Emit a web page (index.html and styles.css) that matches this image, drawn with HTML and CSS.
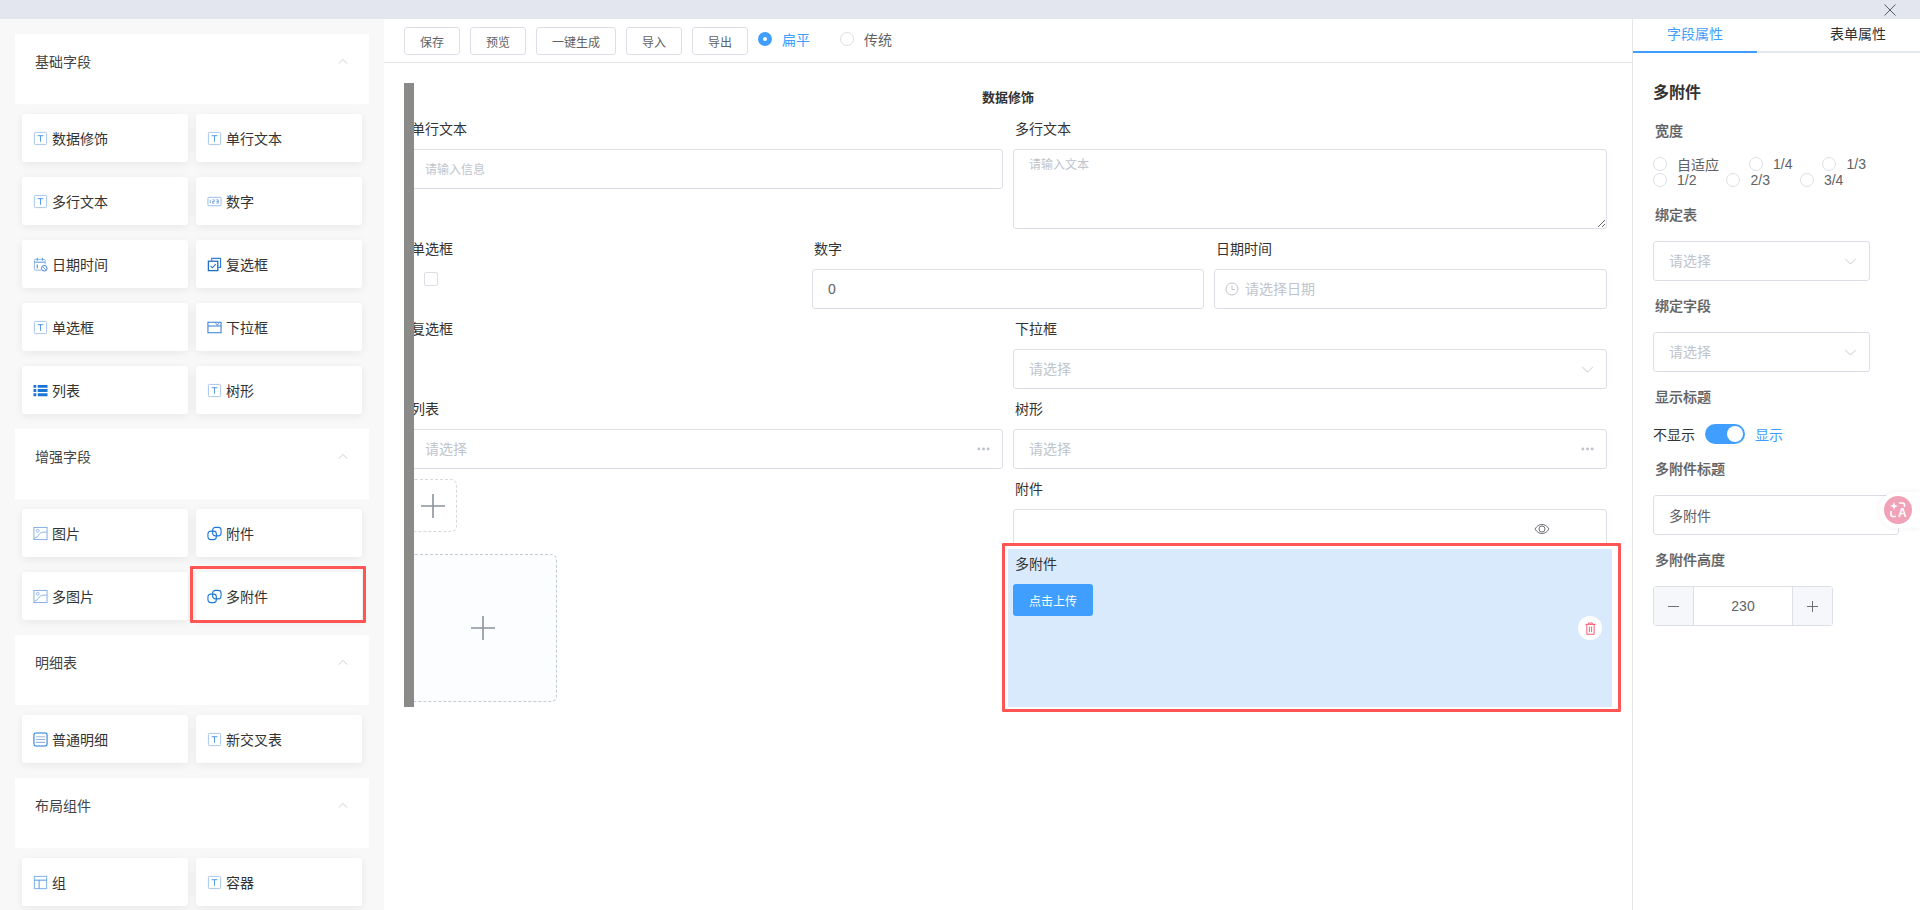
FILE: index.html
```html
<!DOCTYPE html>
<html lang="zh-CN">
<head>
<meta charset="utf-8">
<title>表单设计器</title>
<link rel="stylesheet" href="styles.css">
</head>
<body>
<svg class="sprite" aria-hidden="true">
  <symbol id="i-text" viewBox="0 0 16 16"><rect x="1.5" y="1.5" width="13" height="13" rx="1" fill="#fff" stroke="#a5c3ea"/><path d="M5 5h6M8 5v6.5" fill="none" stroke="#4a94e6"/></symbol>
  <symbol id="i-num" viewBox="0 0 16 16"><rect x="1" y="3.5" width="14" height="9" rx="1" fill="#fff" stroke="#94b8e8"/><path d="M3.5 6.2v3.6M6 6.2h1.8v1.8H6v1.8h1.8M10 6.2h2v3.6h-2M10 8h2" fill="none" stroke="#5a8fd8" stroke-width=".8"/></symbol>
  <symbol id="i-date" viewBox="0 0 16 16"><path d="M9 14H2.5a1 1 0 0 1-1-1V3.5a1 1 0 0 1 1-1h9.5a1 1 0 0 1 1 1V8" fill="none" stroke="#8fb3e6"/><path d="M1.5 5.5h11.5M4.5 1v3M10 1v3" fill="none" stroke="#4a8fe0"/><path d="M4.5 8v4" fill="none" stroke="#3f6fb8"/><circle cx="12" cy="12" r="3" fill="#fff" stroke="#3d7fd6"/><path d="M10.5 10.5l3 3" stroke="#3d7fd6" stroke-width=".8"/></symbol>
  <symbol id="i-check" viewBox="0 0 16 16"><path d="M5 4V1.5h9.5V11H12" fill="none" stroke="#2f7fd6" stroke-width="1.2"/><rect x="1.5" y="4.5" width="10" height="10" fill="#fff" stroke="#1f6fc8" stroke-width="1.4"/><path d="M3.8 9.5l2 2 3.5-3.8" fill="none" stroke="#1f6fc8" stroke-width="1.1"/></symbol>
  <symbol id="i-select" viewBox="0 0 16 16"><path d="M1 2.5h14v4H1zM1 6.5v7h14v-7" fill="none" stroke="#2f7fd6" stroke-width="1.1"/><path d="M9 3.5l2 1.6 2-1.6" fill="none" stroke="#3a72c4"/></symbol>
  <symbol id="i-list" viewBox="0 0 16 16"><path d="M5 2h10.5v3H5zM5 6.5h10.5v3H5zM5 11h10.5v3H5zM.5 2h3v3h-3zM.5 6.5h3v3h-3zM.5 11h3v3h-3z" fill="#1b76d3"/></symbol>
  <symbol id="i-img" viewBox="0 0 16 16"><rect x="1" y="1.5" width="14" height="13" fill="#fff" stroke="#7ea9e4"/><circle cx="5" cy="5" r="1.5" fill="none" stroke="#8fb3e6"/><path d="M1.5 13c2.500-.5 3.500-2 5-4s3-2.500 8-2.500" fill="none" stroke="#7ea9e4"/></symbol>
  <symbol id="i-attach" viewBox="0 0 16 16"><rect x="1" y="5.500" width="9" height="9" rx="3" fill="none" stroke="#1f78d8" stroke-width="1.2"/><rect x="6" y="1.500" width="9" height="9" rx="3" fill="none" stroke="#1f78d8" stroke-width="1.2"/></symbol>
  <symbol id="i-table" viewBox="0 0 16 16"><rect x="1" y="1" width="14" height="14" rx="2" fill="#fff" stroke="#1f78d8" stroke-width="1.1"/><path d="M3 5h10M3 8h10M3 11h10" stroke="#9db7dc" stroke-width="1.2"/></symbol>
  <symbol id="i-group" viewBox="0 0 16 16"><rect x="1.500" y="1.500" width="13" height="13" fill="#fff" stroke="#8db7ea" stroke-width="1.2"/><path d="M1.500 5.500h13M6.500 5.500v9" fill="none" stroke="#4a94e6"/></symbol>
  <symbol id="i-up" viewBox="0 0 12 8"><path d="M1 6.500l5-5 5 5" fill="none" stroke="#c0c4cc"/></symbol>
  <symbol id="i-down" viewBox="0 0 14 8"><path d="M1 1l6 6 6-6" fill="none" stroke="#c0c4cc"/></symbol>
  <symbol id="i-dots" viewBox="0 0 14 4"><circle cx="2" cy="2" r="1.600" fill="#c0c4cc"/><circle cx="7" cy="2" r="1.600" fill="#c0c4cc"/><circle cx="12" cy="2" r="1.600" fill="#c0c4cc"/></symbol>
  <symbol id="i-plus" viewBox="0 0 24 24"><path d="M0 12h24M12 0v24" fill="none" stroke="#8c939d" stroke-width="1.600"/></symbol>
</svg>

<header class="topbar">
  <svg class="close" viewBox="0 0 12 12"><path d="M.5.5l11 11M11.500.5l-11 11" fill="none" stroke="#555c66"/></svg>
</header>

<div class="layout">
  <aside class="sidebar">
    <section>
      <div class="group-head"><span>基础字段</span><svg class="chev"><use href="#i-up"/></svg></div>
      <div class="cards">
        <div class="card"><svg class="ico"><use href="#i-text"/></svg>数据修饰</div>
        <div class="card"><svg class="ico"><use href="#i-text"/></svg>单行文本</div>
        <div class="card"><svg class="ico"><use href="#i-text"/></svg>多行文本</div>
        <div class="card"><svg class="ico"><use href="#i-num"/></svg>数字</div>
        <div class="card"><svg class="ico"><use href="#i-date"/></svg>日期时间</div>
        <div class="card"><svg class="ico"><use href="#i-check"/></svg>复选框</div>
        <div class="card"><svg class="ico"><use href="#i-text"/></svg>单选框</div>
        <div class="card"><svg class="ico"><use href="#i-select"/></svg>下拉框</div>
        <div class="card"><svg class="ico"><use href="#i-list"/></svg>列表</div>
        <div class="card"><svg class="ico"><use href="#i-text"/></svg>树形</div>
      </div>
    </section>
    <section>
      <div class="group-head"><span>增强字段</span><svg class="chev"><use href="#i-up"/></svg></div>
      <div class="cards">
        <div class="card"><svg class="ico"><use href="#i-img"/></svg>图片</div>
        <div class="card"><svg class="ico"><use href="#i-attach"/></svg>附件</div>
        <div class="card"><svg class="ico"><use href="#i-img"/></svg>多图片</div>
        <div class="card card-marked"><svg class="ico"><use href="#i-attach"/></svg>多附件</div>
      </div>
    </section>
    <section>
      <div class="group-head"><span>明细表</span><svg class="chev"><use href="#i-up"/></svg></div>
      <div class="cards">
        <div class="card"><svg class="ico"><use href="#i-table"/></svg>普通明细</div>
        <div class="card"><svg class="ico"><use href="#i-text"/></svg>新交叉表</div>
      </div>
    </section>
    <section>
      <div class="group-head"><span>布局组件</span><svg class="chev"><use href="#i-up"/></svg></div>
      <div class="cards">
        <div class="card"><svg class="ico"><use href="#i-group"/></svg>组</div>
        <div class="card"><svg class="ico"><use href="#i-text"/></svg>容器</div>
      </div>
    </section>
  </aside>

  <main class="center">
    <div class="toolbar">
      <button class="btn">保存</button>
      <button class="btn">预览</button>
      <button class="btn">一键生成</button>
      <button class="btn">导入</button>
      <button class="btn">导出</button>
      <div class="mode">
        <span class="mode-item is-on"><i class="dot"></i>扁平</span>
        <span class="mode-item"><i class="dot"></i>传统</span>
      </div>
    </div>
    <div class="canvas">
      <div class="drag-bar"></div>
      <h2 class="form-title">数据修饰</h2>
      <div class="row cols-2">
        <div class="item"><label>单行文本</label><div class="ctl"><input class="small-ph" placeholder="请输入信息"></div></div>
        <div class="item"><label>多行文本</label><textarea class="area" placeholder="请输入文本"></textarea></div>
      </div>
      <div class="row cols-3">
        <div class="item"><label>单选框</label><div class="ctl-blank"><span class="box"></span></div></div>
        <div class="item"><label>数字</label><div class="ctl"><input value="0"></div></div>
        <div class="item"><label>日期时间</label><div class="ctl ctl-date"><svg class="clock" viewBox="0 0 14 14"><circle cx="7" cy="7" r="6" fill="none" stroke="#c0c4cc"/><path d="M7 3.500V7.500H10" fill="none" stroke="#c0c4cc"/></svg><input placeholder="请选择日期"></div></div>
      </div>
      <div class="row cols-2">
        <div class="item"><label>复选框</label></div>
        <div class="item"><label>下拉框</label><div class="ctl"><input placeholder="请选择"><svg class="down"><use href="#i-down"/></svg></div></div>
      </div>
      <div class="row cols-2">
        <div class="item"><label>列表</label><div class="ctl"><input placeholder="请选择"><svg class="dots"><use href="#i-dots"/></svg></div></div>
        <div class="item"><label>树形</label><div class="ctl"><input placeholder="请选择"><svg class="dots"><use href="#i-dots"/></svg></div></div>
      </div>
      <div class="row cols-2 row-tight">
        <div class="item"><div class="upload-small"><svg class="plus"><use href="#i-plus"/></svg></div></div>
        <div class="item"><label>附件</label><div class="ctl ctl-eye"><svg class="eye" viewBox="0 0 16 16"><path d="M1 8c1.800-3 4.200-4.500 7-4.500S13.200 5 15 8c-1.800 3-4.200 4.500-7 4.500S2.800 11 1 8z" fill="none" stroke="#6f7277"/><circle cx="8" cy="8" r="3" fill="none" stroke="#6f7277"/></svg></div></div>
      </div>
      <div class="row cols-2">
        <div class="item"><div class="upload-big"><svg class="plus"><use href="#i-plus"/></svg></div></div>
        <div class="selected-frame">
          <div class="selected">
            <label>多附件</label>
            <button class="btn-primary">点击上传</button>
            <span class="del"><svg viewBox="0 0 12 14"><path d="M.5 2.500h11M4 2.500V1h4v1.500M2 2.500v10.800h8V2.500M4.800 5v6M7.200 5v6" fill="none" stroke="#f4516c"/></svg></span>
          </div>
        </div>
      </div>
    </div>
  </main>

  <aside class="props">
    <div class="tabs">
      <div class="tab is-active">字段属性</div>
      <div class="tab tab-rest">表单属性</div>
    </div>
    <div class="props-body">
      <h3 class="props-title">多附件</h3>
      <div class="p-label p-label-width">宽度</div>
      <div class="radios">
        <span class="radio"><i></i>自适应</span>
        <span class="radio"><i></i>1/4</span>
        <span class="radio"><i></i>1/3</span>
        <span class="radio"><i></i>1/2</span>
        <span class="radio"><i></i>2/3</span>
        <span class="radio"><i></i>3/4</span>
      </div>
      <div class="p-label p-label-bound">绑定表</div>
      <div class="ctl w-select"><input placeholder="请选择"><svg class="down"><use href="#i-down"/></svg></div>
      <div class="p-label">绑定字段</div>
      <div class="ctl w-select"><input placeholder="请选择"><svg class="down"><use href="#i-down"/></svg></div>
      <div class="p-label">显示标题</div>
      <div class="switch-row">
        <span>不显示</span>
        <span class="switch"><i></i></span>
        <span class="on-text">显示</span>
      </div>
      <div class="p-label">多附件标题</div>
      <div class="ctl w-title"><input value="多附件"></div>
      <div class="p-label">多附件高度</div>
      <div class="stepper">
        <span class="step"><svg viewBox="0 0 12 12"><path d="M0 6h12" stroke="#606266"/></svg></span>
        <span class="step-val">230</span>
        <span class="step"><svg viewBox="0 0 12 12"><path d="M0 6h12M6 0v12" stroke="#606266"/></svg></span>
      </div>
    </div>
  </aside>
</div>

<div class="translate">
  <span class="translate-btn">
    <svg viewBox="0 0 20 20"><path d="M11 3h3.500a2 2 0 0 1 2 2v2M3 11v3.500a2 2 0 0 0 2 2h3" fill="none" stroke="#fff" stroke-width="1.600"/><path d="M6 2l1.100 2.900L10 6 7.100 7.100 6 10 4.900 7.100 2 6l2.900-1.100z" fill="#fff"/></svg>
    <b>A</b>
  </span>
</div>
</body>
</html>
```

FILE: styles.css
```css
* { box-sizing: border-box; }
html, body { margin: 0; height: 100%; overflow: hidden; }
body {
  font-family: "Liberation Sans", "Noto Sans CJK SC", sans-serif;
  font-size: 14px;
  color: #333;
  background: #fff;
  position: relative;
}
.sprite { position: absolute; width: 0; height: 0; }

.topbar {
  height: 19px;
  background: #e3e6ee;
  display: flex;
  justify-content: flex-end;
  align-items: center;
  padding-right: 24px;
}
.close { width: 12px; height: 12px; }

.layout { display: flex; height: 891px; }

/* left */
.sidebar {
  width: 384px;
  flex: none;
  background: #f8f8f8;
  padding: 15px 15px 0;
  overflow: hidden;
}
.group-head {
  height: 70px;
  background: #fff;
  display: flex;
  justify-content: space-between;
  padding: 18px 21px 0 20px;
  line-height: 20px;
  color: #444;
}
.chev { width: 10px; height: 7px; margin-top: 6px; }
.cards {
  display: grid;
  grid-template-columns: 166px 166px;
  column-gap: 8px;
  row-gap: 15px;
  padding: 10px 7px 15px;
}
.card {
  height: 48px;
  background: #fff;
  border-radius: 3px;
  box-shadow: 0 2px 8px rgba(0, 0, 0, .07);
  display: flex;
  align-items: center;
  padding-left: 11px;
  color: #333;
}
.ico { width: 15px; height: 15px; margin-right: 4px; flex: none; }
.card-marked { position: relative; }
.card-marked::after {
  content: "";
  position: absolute;
  inset: -6px -4px -3px -6px;
  border: 3px solid #f55;
  border-radius: 1px;
}

/* center */
.center { flex: 1; min-width: 0; }
.toolbar {
  height: 44px;
  border-bottom: 1px solid #e6e6e6;
  display: flex;
  gap: 10px;
  padding: 8px 20px 0;
}
.btn {
  height: 28px;
  padding: 0 15px;
  border: 1px solid #dcdfe6;
  border-radius: 3px;
  background: #fff;
  font: inherit;
  font-size: 12px;
  color: #606266;
}
.mode { display: flex; gap: 30px; height: 24px; align-items: center; }
.mode-item { display: flex; align-items: center; gap: 10px; color: #606266; }
.dot {
  width: 14px;
  height: 14px;
  border: 1px solid #dcdfe6;
  border-radius: 50%;
  background: #fff;
}
.mode-item.is-on { color: #409eff; }
.mode-item.is-on .dot { border: 5px solid #409eff; }

.canvas { position: relative; padding: 25px 25px 0; height: 847px; }
.drag-bar {
  position: absolute;
  left: 20px;
  top: 20px;
  width: 10px;
  height: 624px;
  background: #8a8b89;
  z-index: 2;
}
.form-title {
  margin: 0 0 11px;
  height: 20px;
  font-size: 13px;
  line-height: 20px;
  font-weight: 700;
  text-align: center;
  width: 1198px;
  color: #333;
}
.row { display: grid; column-gap: 10px; width: 1198px; margin-bottom: 10px; }
.cols-2 { grid-template-columns: 594px 594px; }
.cols-3 { grid-template-columns: 393px 392px 393px; }
.row-tight { margin-bottom: 5px; }
.item label, .selected label {
  display: block;
  height: 20px;
  line-height: 20px;
  margin-bottom: 10px;
  padding-left: 2px;
  color: #333;
}
.ctl {
  height: 40px;
  border: 1px solid #dcdfe6;
  border-radius: 3px;
  display: flex;
  align-items: center;
  padding: 0 15px;
  background: #fff;
}
.ctl input {
  flex: 1;
  min-width: 0;
  border: 0;
  outline: 0;
  padding: 0;
  background: transparent;
  font: inherit;
  color: #606266;
}
input::placeholder, textarea::placeholder { color: #c0c4cc; opacity: 1; }
.small-ph::placeholder { font-size: 12px; }
.area {
  display: block;
  width: 100%;
  height: 80px;
  border: 1px solid #dcdfe6;
  border-radius: 3px;
  padding: 5px 15px;
  outline: 0;
  font: inherit;
  font-size: 12px;
  line-height: 20px;
  color: #606266;
}
.ctl-blank { height: 40px; padding: 3px 0 0 15px; }
.box {
  display: block;
  width: 14px;
  height: 14px;
  border: 1px solid #dcdfe6;
  border-radius: 2px;
}
.ctl-date { padding-left: 10px; }
.clock { width: 14px; height: 14px; margin-right: 6px; flex: none; }
.down { width: 13px; height: 7px; flex: none; margin-right: -3px; }
.dots { width: 13px; height: 4px; flex: none; margin-right: -3px; }
.ctl-eye { justify-content: flex-end; padding-right: 56px; }
.eye { width: 16px; height: 16px; }
.upload-small, .upload-big {
  display: flex;
  align-items: center;
  justify-content: center;
  border-radius: 6px;
}
.upload-small {
  width: 48px;
  height: 53px;
  border: 1px dashed #d9d9d9;
}
.upload-big {
  width: 148px;
  height: 148px;
  border: 1px dashed #c0ccda;
  background: #fbfdff;
}
.plus { width: 24px; height: 24px; }
.selected-frame {
  position: relative;
  z-index: 1;
  margin: -11px -14px 0 -11px;
  height: 169px;
  border: 3px solid #f55;
  border-radius: 1px;
  padding: 3px 6px 2px 3px;
  background: #fff;
}
.selected {
  position: relative;
  height: 158px;
  background: #d9eafc;
  padding: 5px;
}
.btn-primary {
  display: block;
  width: 80px;
  height: 32px;
  padding: 0;
  border: 0;
  border-radius: 3px;
  background: #409eff;
  color: #fff;
  font: inherit;
  font-size: 12px;
}
.del {
  position: absolute;
  right: 10px;
  top: 67px;
  width: 24px;
  height: 24px;
  border-radius: 50%;
  background: #fff;
  display: flex;
  align-items: center;
  justify-content: center;
}
.del svg { width: 11px; height: 13px; }

/* right */
.props {
  width: 288px;
  flex: none;
  border-left: 1px solid #e6e6e6;
}
.tabs { display: flex; height: 34px; border-bottom: 2px solid #e4e7ed; }
.tab { height: 34px; line-height: 30px; color: #303133; }
.tab.is-active {
  width: 124px;
  text-align: center;
  color: #409eff;
  border-bottom: 2px solid #409eff;
}
.tab-rest { padding-left: 73px; }
.props-body { padding: 28px 0 0 20px; }
.props-title {
  margin: 0 0 16px;
  font-size: 16px;
  line-height: 24px;
  font-weight: 700;
  color: #333;
}
.p-label {
  height: 21px;
  line-height: 20px;
  margin-bottom: 15px;
  padding-left: 2px;
  font-weight: 500;
  color: #606266;
  -webkit-text-stroke: .2px #606266;
}
.p-label-width { margin-bottom: 14px; }
.p-label-bound { margin-top: 17px; }
.radios { display: flex; flex-wrap: wrap; width: 267px; }
.radio {
  display: flex;
  align-items: center;
  height: 16px;
  margin-right: 30px;
  color: #606266;
}
.radio i {
  width: 14px;
  height: 14px;
  margin-right: 10px;
  border: 1px solid #dcdfe6;
  border-radius: 50%;
  background: #fff;
}
.w-select { width: 217px; margin-bottom: 15px; }
.w-title { width: 246px; margin-bottom: 15px; }
.switch-row {
  display: flex;
  align-items: center;
  gap: 10px;
  height: 20px;
  margin: 16px 0 15px;
  color: #333;
}
.p-label + .switch-row { margin-top: 16px; }
.switch {
  position: relative;
  width: 40px;
  height: 20px;
  border-radius: 10px;
  background: #409eff;
}
.switch i {
  position: absolute;
  right: 2px;
  top: 2px;
  width: 16px;
  height: 16px;
  border-radius: 50%;
  background: #fff;
}
.on-text { color: #409eff; }
.stepper {
  display: flex;
  width: 180px;
  height: 40px;
  border: 1px solid #dcdfe6;
  border-radius: 3px;
}
.step {
  width: 40px;
  flex: none;
  background: #f5f7fa;
  display: flex;
  align-items: center;
  justify-content: center;
}
.step:first-child { border-right: 1px solid #dcdfe6; }
.step:last-child { border-left: 1px solid #dcdfe6; }
.step svg { width: 11px; height: 11px; }
.step-val { flex: 1; text-align: center; line-height: 38px; color: #606266; }

.translate {
  position: absolute;
  right: 0;
  top: 492px;
  width: 41px;
  height: 36px;
  padding: 4px 0 0 5px;
  background: #fff;
  border-radius: 18px 0 0 18px;
  box-shadow: 0 0 6px rgba(0, 0, 0, .06);
}
.translate-btn {
  position: relative;
  display: block;
  width: 28px;
  height: 28px;
  border-radius: 50%;
  background: #f0a2b8;
}
.translate-btn svg { position: absolute; left: 4px; top: 4px; width: 20px; height: 20px; }
.translate-btn b {
  position: absolute;
  left: 14px;
  top: 11px;
  font-size: 12px;
  line-height: 13px;
  color: #fff;
}
```
